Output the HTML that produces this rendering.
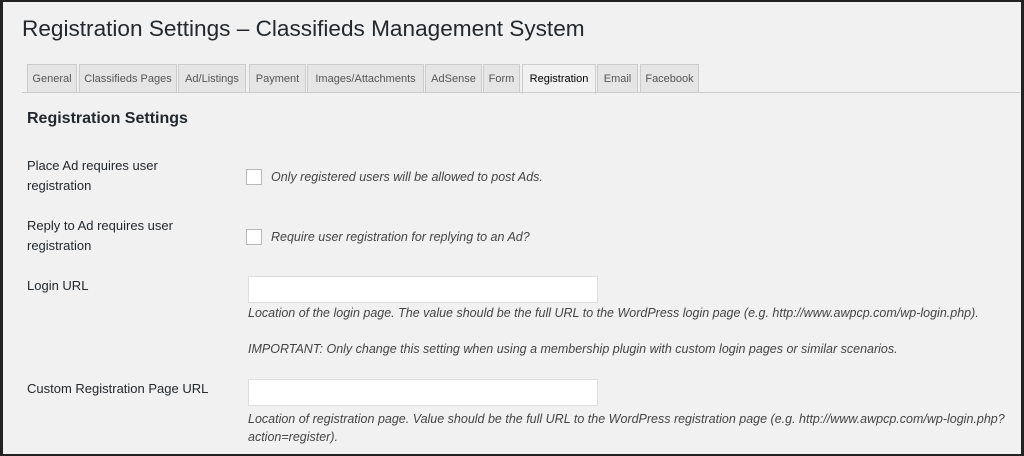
<!DOCTYPE html>
<html><head><style>
*{margin:0;padding:0;box-sizing:border-box}
body{width:1024px;height:456px;overflow:hidden;background:#222;font-family:"Liberation Sans",sans-serif;color:#23282d;position:relative}
#f{position:absolute;left:3px;top:2px;width:1018px;height:452px;background:#f1f1f1}
.a{position:absolute;white-space:nowrap}
h1{position:absolute;left:19px;top:14px;font-size:22.6px;font-weight:normal;color:#23282d}
.tab{position:absolute;top:62px;height:29px;border:1px solid #ccc;border-bottom:none;background:#e5e5e5;font-size:11px;color:#555;text-align:center;line-height:28px}
.tab.on{background:#f1f1f1;color:#000;height:30px}
.line{position:absolute;left:19px;top:90px;width:998px;height:1px;background:#ccc}
.lbl{font-size:13px;line-height:20px;color:#23282d}
.d{font-size:12.5px;font-style:italic;color:#444}
.cb{position:absolute;width:16px;height:16px;border:1px solid #b4b9be;background:#fff}
.in{position:absolute;left:245px;width:350px;height:27px;border:1px solid #ddd;background:#fff}
</style></head><body><div id="f">
<h1>Registration Settings – Classifieds Management System</h1>
<div class="tab" style="left:24px;width:50px">General</div>
<div class="tab" style="left:76px;width:98px">Classifieds Pages</div>
<div class="tab" style="left:175px;width:68px">Ad/Listings</div>
<div class="tab" style="left:246px;width:57px">Payment</div>
<div class="tab" style="left:304px;width:117px">Images/Attachments</div>
<div class="tab" style="left:422px;width:57px">AdSense</div>
<div class="tab" style="left:480px;width:37px">Form</div>
<div class="tab on" style="left:519px;width:74px">Registration</div>
<div class="tab" style="left:594px;width:41px">Email</div>
<div class="tab" style="left:637px;width:59px">Facebook</div>
<div class="line"></div>
<div class="a" style="left:24px;top:108px;font-size:16px;font-weight:bold">Registration Settings</div>
<div class="a lbl" style="left:24px;top:154px">Place Ad requires user<br>registration</div>
<div class="cb" style="left:243px;top:167px"></div>
<div class="a d" style="left:268px;top:168px">Only registered users will be allowed to post Ads.</div>
<div class="a lbl" style="left:24px;top:214px">Reply to Ad requires user<br>registration</div>
<div class="cb" style="left:243px;top:227px"></div>
<div class="a d" style="left:268px;top:228px">Require user registration for replying to an Ad?</div>
<div class="a lbl" style="left:24px;top:274px">Login URL</div>
<div class="in" style="top:274px"></div>
<div class="a d" style="left:245px;top:304px">Location of the login page. The value should be the full URL to the WordPress login page (e.g. http://www.awpcp.com/wp-login.php).</div>
<div class="a d" style="left:245px;top:340px">IMPORTANT: Only change this setting when using a membership plugin with custom login pages or similar scenarios.</div>
<div class="a lbl" style="left:24px;top:377px">Custom Registration Page URL</div>
<div class="in" style="top:377px"></div>
<div class="a d" style="left:245px;top:408px;line-height:18px">Location of registration page. Value should be the full URL to the WordPress registration page (e.g. http://www.awpcp.com/wp-login.php?<br>action=register).</div>
</div></body></html>
